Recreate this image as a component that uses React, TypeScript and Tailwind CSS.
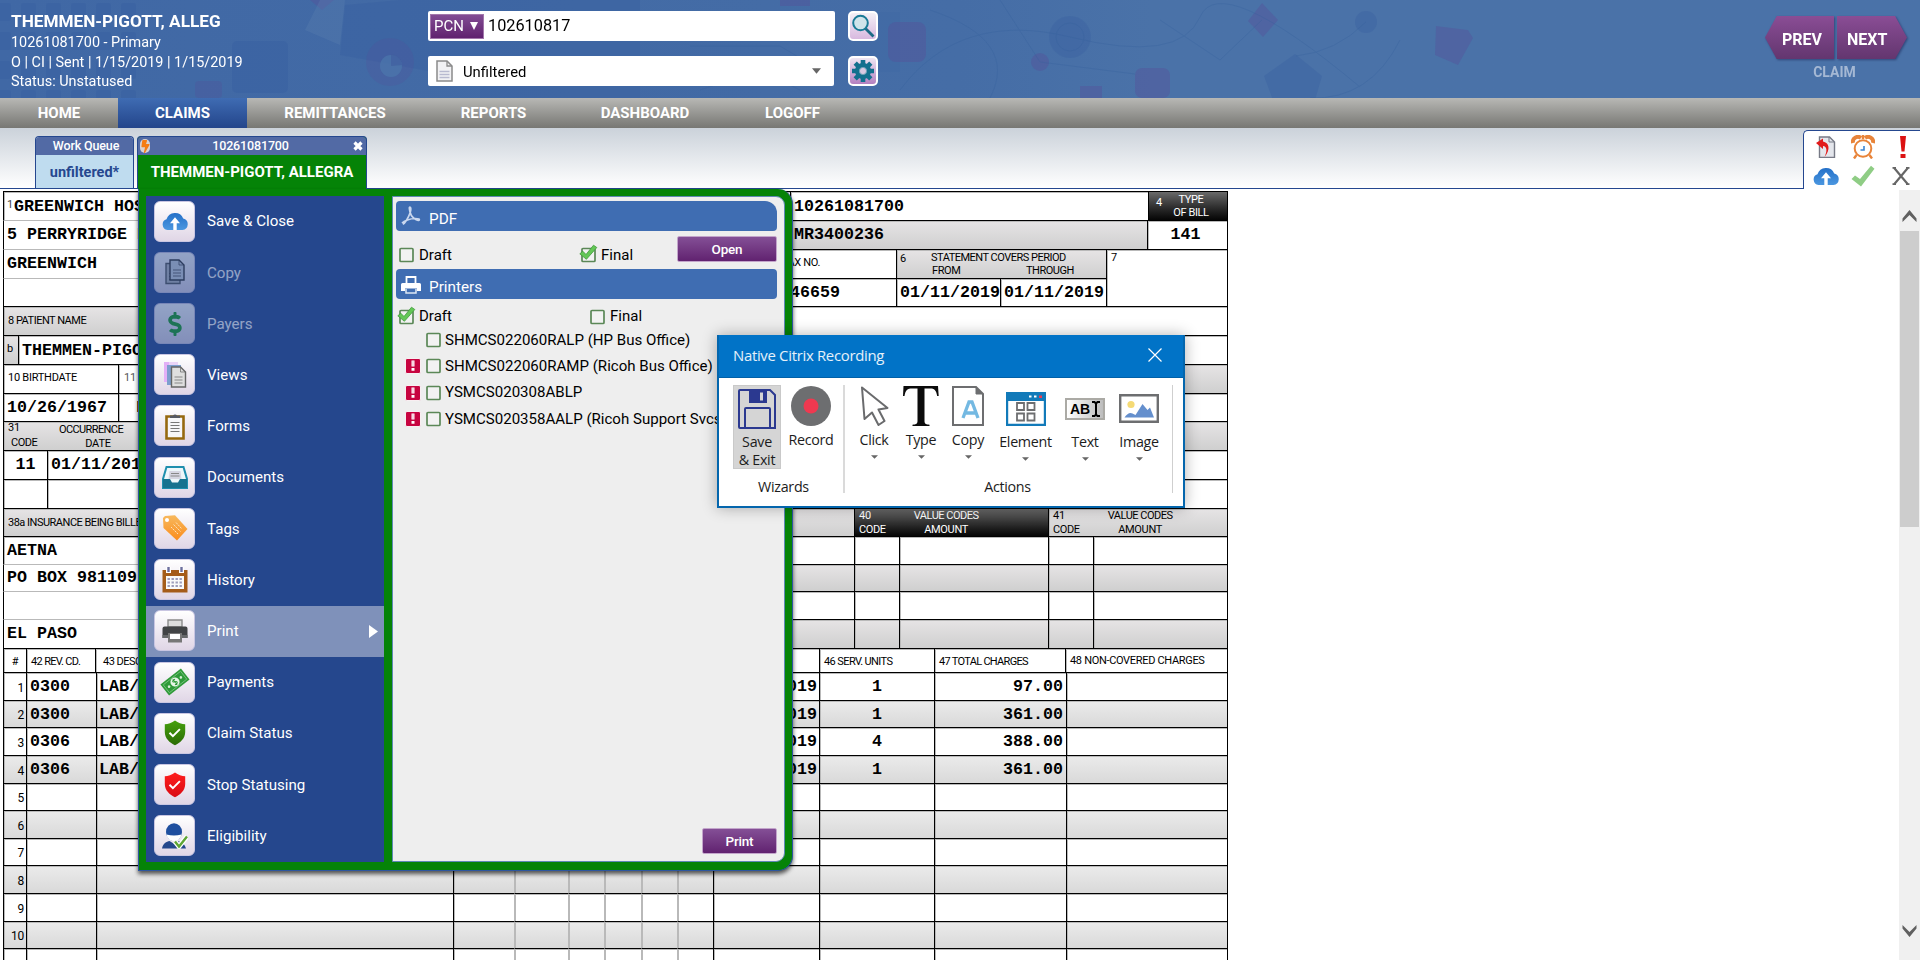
import React from "react";
import { FaDollarSign, FaBolt } from "react-icons/fa";

type Kids = { children?: React.ReactNode };

function Cell({ c = "", children }: { c?: string } & Kids) {
  return (
    <div
      className={
        "flex shrink-0 items-center overflow-hidden border-l border-t border-l-black whitespace-pre shadow-[inset_1px_1px_0_#b9b9b9] " + c
      }
    >
      {children}
    </div>
  );
}

const B = "border-t-black";
const GRAY = "border-t-black bg-linear-to-b from-[#e6e4e5] to-[#cfcfcf]";
const DARK = "border-t-black bg-linear-to-b from-[#6a6a6a] to-[#060606] text-white shadow-none";

function V({ c = "", children }: { c?: string } & Kids) {
  return <span className={"pt-[2px] font-['Liberation_Mono',monospace] text-[16.67px] font-bold leading-none " + c}>{children}</span>;
}
function L({ c = "", t = "tracking-[-0.2px]", children }: { c?: string; t?: string } & Kids) {
  return <span className={"text-[11px] leading-[13px] " + t + " " + c}>{children}</span>;
}

function ValueHead({ n, c }: { n: string; c: string }) {
  return (
    <Cell c={c}>
      <div className="flex flex-col pl-1 pt-px">
        <L c="leading-[14px]">{n}</L>
        <L c="leading-[14px]" t="tracking-[-0.4px]">CODE</L>
      </div>
      <div className="ml-[27px] flex w-[67px] flex-col items-center pt-px">
        <L c="leading-[14px]" t="tracking-[-0.5px]">VALUE CODES</L>
        <L c="leading-[14px]" t="tracking-[-0.3px]">AMOUNT</L>
      </div>
    </Cell>
  );
}

const lines = [
  { n: "1", h: "h-[28px]", code: "0300", units: "1", total: "97.00" },
  { n: "2", h: "h-[27px]", code: "0300", units: "1", total: "361.00" },
  { n: "3", h: "h-[28px]", code: "0306", units: "4", total: "388.00" },
  { n: "4", h: "h-[28px]", code: "0306", units: "1", total: "361.00" },
  { n: "5", h: "h-[27px]" },
  { n: "6", h: "h-[28px]" },
  { n: "7", h: "h-[27px]" },
  { n: "8", h: "h-[28px]" },
  { n: "9", h: "h-[28px]" },
  { n: "10", h: "h-[27px]" },
  { n: "", h: "h-[28px]" },
];

function ClaimForm() {
  return (
    <div className="ml-[3px] mt-[2px] h-[790px] w-[1225px] shrink-0 border-r border-black text-black">
      <div className="flex h-[29px]">
        <Cell c={"w-[787px] pl-[3px] " + B}>
          <L c="mb-1 w-[7px] text-[10px] text-[#444]">1</L>
          <V>GREENWICH HOSPITAL</V>
        </Cell>
        <Cell c={"w-[358px] pl-[3px] " + B}><V>10261081700</V></Cell>
        <Cell c={"w-[79px] " + DARK}>
          <L c="mb-2 ml-[7px] w-[17px]">4</L>
          <L c="w-[36px] text-center leading-[10px]" t="tracking-[-0.4px]">{"TYPE\nOF BILL"}</L>
        </Cell>
      </div>
      <div className="flex h-[29px]">
        <Cell c="w-[787px] border-t-[#b9b9b9] pl-[3px] shadow-none"><V c="-mt-px">5 PERRYRIDGE ROAD</V></Cell>
        <Cell c={"w-[357px] pl-[3px] " + GRAY}><V c="-mt-px">MR3400236</V></Cell>
        <Cell c={"w-[80px] justify-center " + B}><V c="-ml-1 -mt-px">141</V></Cell>
      </div>
      <div className="flex h-[57px]">
        <div className="w-[732px]">
          <div className="flex h-[29px]"><Cell c="w-full border-t-[#b9b9b9] pl-[3px] shadow-none"><V c="-mt-px">GREENWICH</V></Cell></div>
          <div className="flex h-[28px]"><Cell c="w-full border-t-[#b9b9b9] shadow-none" /></div>
        </div>
        <div className="w-[161px]">
          <div className="flex h-[29px]"><Cell c={"w-full justify-end pr-[76px] " + B}><L c="mt-[-4px]" t="tracking-[-0.35px]">5 FED. TAX NO.</L></Cell></div>
          <div className="flex h-[28px]"><Cell c={"w-full pl-[4px] " + B}><V>06-0646659</V></Cell></div>
        </div>
        <div className="w-[210px]">
          <div className="flex h-[29px]">
            <Cell c={"w-full items-start pl-[3px] " + GRAY}>
              <L c="mt-[2px] w-[31px]">6</L>
              <div className="flex w-[143px] flex-col pt-px">
                <L t="tracking-[-0.5px]">STATEMENT COVERS PERIOD</L>
                <div className="flex justify-between pl-px"><L t="tracking-[-0.4px]">FROM</L><L t="tracking-[-0.45px]">THROUGH</L></div>
              </div>
            </Cell>
          </div>
          <div className="flex h-[28px]">
            <Cell c={"w-[104px] pl-[3px] " + B}><V>01/11/2019</V></Cell>
            <Cell c={"w-[106px] pl-[3px] " + B}><V>01/11/2019</V></Cell>
          </div>
        </div>
        <Cell c={"w-[121px] items-start pl-[4px] pt-px " + B}><L>7</L></Cell>
      </div>
      <div className="flex h-[29px]">
        <Cell c={"w-[787px] pl-[4px] " + GRAY}><L c="-mt-px" t="tracking-[-0.5px]">8 PATIENT NAME</L></Cell>
        <Cell c={"w-[437px] " + B} />
      </div>
      <div className="flex h-[29px]">
        <Cell c={"w-[15px] pl-[3px] " + GRAY}><L c="-mt-1">b</L></Cell>
        <Cell c={"w-[1209px] pl-[3px] " + B}><V>THEMMEN-PIGOTT</V></Cell>
      </div>
      <div className="flex h-[29px]">
        <Cell c={"w-[115px] pl-[4px] " + B}><L c="-mt-1" t="tracking-[-0.25px]">10 BIRTHDATE</L></Cell>
        <Cell c={"w-[60px] pl-[5px] " + B}><L c="-mt-1 text-[#555]">11 SEX</L></Cell>
        <Cell c={"w-[1049px] " + GRAY} />
      </div>
      <div className="flex h-[28px]">
        <Cell c={"w-[115px] pl-[3px] " + B}><V>10/26/1967</V></Cell>
        <Cell c={"w-[60px] pl-[17px] " + B}><V>F</V></Cell>
        <Cell c={"w-[1049px] " + B} />
      </div>
      <div className="flex h-[29px]">
        <Cell c={"w-[1224px] " + GRAY}>
          <div className="-mt-px flex w-[55px] flex-col pl-[4px]"><L c="leading-[14px]">31</L><L c="pl-[3px] pt-px leading-[14px]" t="tracking-[-0.45px]">CODE</L></div>
          <div className="flex w-[64px] flex-col items-center pt-px"><L c="leading-[14px]" t="tracking-[-0.6px]">OCCURRENCE</L><L c="pl-[14px] leading-[14px]">DATE</L></div>
        </Cell>
      </div>
      <div className="flex h-[29px]">
        <Cell c={"w-[44px] justify-center " + B}><V c="-mt-px">11</V></Cell>
        <Cell c={"w-[1180px] pl-[3px] " + B}><V c="-mt-px">01/11/2019</V></Cell>
      </div>
      <div className="flex h-[29px]">
        <Cell c={"w-[44px] " + B} />
        <Cell c={"w-[1180px] " + B} />
      </div>
      <div className="flex h-[28px]">
        <Cell c={"w-[851px] pl-[4px] " + GRAY}><L c="-mt-px" t="tracking-[-0.5px]">38a INSURANCE BEING BILLED</L></Cell>
        <ValueHead n="40" c={"w-[194px] " + DARK} />
        <ValueHead n="41" c={"w-[179px] " + GRAY} />
      </div>
      {[
        ["h-[28px]", B, "AETNA", B],
        ["h-[27px]", GRAY, "PO BOX 981109", "border-t-[#b9b9b9] shadow-none"],
        ["h-[28px]", B, "", "border-t-[#b9b9b9] shadow-none"],
        ["h-[29px]", GRAY, "EL PASO", "border-t-[#b9b9b9] shadow-none"],
      ].map(([h, g, t, lc], i) => (
        <div key={i} className={"flex " + h}>
          <Cell c={"w-[400px] pl-[3px] " + lc}><V c="-mt-px">{t}</V></Cell>
          <Cell c={"w-[451px] " + g} />
          <Cell c={"w-[45px] " + g} />
          <Cell c={"w-[149px] " + g} />
          <Cell c={"w-[45px] " + g} />
          <Cell c={"w-[134px] " + g} />
        </div>
      ))}
      <div className="flex h-[24px]">
        <Cell c={"w-[23px] justify-center pt-px " + B}><L>#</L></Cell>
        <Cell c={"w-[69px] pl-[4px] pt-[2px] " + B}><L t="tracking-[-0.65px]">42 REV. CD.</L></Cell>
        <Cell c={"w-[724px] pl-[7px] pt-[2px] " + B}><L t="tracking-[-0.5px]">43 DESCRIPTION</L></Cell>
        <Cell c={"w-[115px] pl-[4px] pt-[2px] " + B}><L t="tracking-[-0.6px]">46 SERV. UNITS</L></Cell>
        <Cell c={"w-[131px] pl-[4px] pt-[2px] " + B}><L t="tracking-[-0.7px]">47 TOTAL CHARGES</L></Cell>
        <Cell c={"w-[162px] pl-[4px] " + B}><L t="tracking-[-0.32px]">48 NON-COVERED CHARGES</L></Cell>
      </div>
      {lines.map((l, i) => {
        const g = i % 2 ? "border-t-black bg-linear-to-b from-[#ebebeb] to-[#d9d9d9]" : B;
        return (
          <div key={i} className={"flex " + l.h}>
            <Cell c={"w-[23px] justify-end pr-[2px] " + g}><L c="mt-[3px] text-[12px]">{l.n}</L></Cell>
            <Cell c={"w-[70px] pl-[3px] " + g}><V>{l.code}</V></Cell>
            <Cell c={"w-[357px] pl-[2px] " + g}><V>{l.code ? "LAB/" : ""}</V></Cell>
            <Cell c={"w-[61px] " + g} />
            <Cell c={"w-[54px] border-l-[#b9b9b9]! " + g} />
            <Cell c={"w-[36px] border-l-[#b9b9b9]! " + g} />
            <Cell c={"w-[37px] border-l-[#b9b9b9]! " + g} />
            <Cell c={"w-[36px] border-l-[#b9b9b9]! " + g} />
            <Cell c={"w-[36px] border-l-[#b9b9b9]! " + g} />
            <Cell c={"w-[106px] justify-end pr-[2px] " + g}><V>{l.code ? "01112019" : ""}</V></Cell>
            <Cell c={"w-[115px] justify-center " + g}><V>{l.units}</V></Cell>
            <Cell c={"w-[132px] justify-end pr-[3px] " + g}><V>{l.total}</V></Cell>
            <Cell c={"w-[161px] " + g} />
          </div>
        );
      })}
    </div>
  );
}

/* ---------- menu icons ---------- */
const Cloud = () => (
  <svg viewBox="0 0 26 18" className="h-[18px] w-[26px]">
    <defs><linearGradient id="cl" x1="0" y1="0" x2="0" y2="1"><stop offset="0" stopColor="#2470c8" /><stop offset="1" stopColor="#4b97e0" /></linearGradient></defs>
    <path d="M5.500 18A5.500 5.500 0 0 1 4.500 7.300 A8.900 8.900 0 0 1 21.200 6.400 A5.900 5.900 0 0 1 20.500 18Z" fill="url(#cl)" />
    <path d="M11.300 18v-6.700H8L13 5.200l5 6.100h-3.300V18Z" fill="#fff" />
  </svg>
);
const Page = ({ x, y, f, s }: { x: number; y: number; f: string; s: string }) => (
  <g transform={`translate(${x} ${y})`}>
    <path d="M0 0h9l5 5v15H0Z" fill={f} stroke={s} strokeWidth="1.400" />
    <path d="M9 0v5h5M3 10h8M3 13h8M3 16h8" fill="none" stroke={s} strokeWidth=".7" />
  </g>
);
const CopyIcon = () => (
  <svg viewBox="0 0 20 26" className="h-[26px] w-[20px]"><Page x={1} y={4.500} f="#b9b9b9" s="#555" /><Page x={5} y={1} f="#cfd4dd" s="#333" /></svg>
);
const ViewsIcon = () => (
  <svg viewBox="0 0 24 28" className="h-[28px] w-[24px]">
    <path d="M1 1h14v20H1Z" fill="#ead4f7" /><path d="M1 1h5v20H1Z" fill="#e3b0f7" />
    <path d="M4 4h14v20H4Z" fill="#7d9fce" /><Page x={8.500} y={6} f="#dedede" s="#666" />
  </svg>
);
const FormsIcon = () => (
  <svg viewBox="0 0 22 28" className="h-[28px] w-[22px]">
    <path d="M2.500 4.500h17v22h-17Z" fill="#f6f6f8" stroke="#96690f" strokeWidth="2.600" />
    <path d="M6 6V3.500h3a2.500 2.500 0 0 1 4 0h3V6Z" fill="#555862" />
    <path d="M6.500 10.500h9M6.500 13.500h9M6.500 16.500h9M6.500 19.500h9" stroke="#777" strokeWidth="1.200" />
  </svg>
);
const DocsIcon = () => (
  <svg viewBox="0 0 26 23" className="h-[23px] w-[26px]">
    <path d="M4.500 1h17L25 13v9H1v-9Z" fill="#eef7fa" stroke="#1f8fae" strokeWidth="2" />
    <path d="M7.500 5h11l1 8H6.500Z" fill="#d6d6e2" /><path d="M9 7.500h8M8.500 10h9" stroke="#888" />
    <path d="M1 13h7l2 3.500h6l2-3.500h7v9H1Z" fill="#17728f" />
  </svg>
);
const TagIcon = () => (
  <svg viewBox="0 0 26 26" className="size-[26px]">
    <defs><linearGradient id="tg" x1="0" y1="0" x2="0" y2="1"><stop offset="0" stopColor="#f7b95e" /><stop offset="1" stopColor="#fb8c1c" /></linearGradient></defs>
    <path d="M1 3 3 1l10-.800L25.500 14 15 25.500 1.500 13Z" fill="url(#tg)" /><circle cx="5" cy="5" r="2" fill="#fff" />
    <path d="m9 12 7 7M11.500 9.500l7 7M14 7.500l6 6.500" stroke="#fde0b8" strokeDasharray="2 .8" />
  </svg>
);
const CalIcon = () => (
  <svg viewBox="0 0 26 26" className="size-[26px]">
    <path d="M.500 3h25v22.500H.500Z" fill="#a55c1a" /><path d="M4 9h18v13H4Z" fill="#fafafa" />
    <path d="M5.500 12h15M5.500 15.500h15M5.500 19h15" stroke="#9d9dbb" strokeWidth="2" strokeDasharray="2.400 1.600" />
    <path d="M4 0h5v6H4ZM17 0h5v6h-5Z" fill="#fff" /><path d="M6.500 0v5M19.500 0v5" stroke="#6d709e" strokeWidth="2.400" />
  </svg>
);
const PrinterIcon = () => (
  <svg viewBox="0 0 26 24" className="h-[24px] w-[26px]">
    <path d="M6 1h14v7H6Z" fill="#ddd" stroke="#8b8b8b" strokeWidth="1.400" />
    <path d="M2.500 7.500h21a2 2 0 0 1 2 2V19h-25V9.500a2 2 0 0 1 2-2Z" fill="#414345" />
    <path d="M.500 16h25v3H.500Z" fill="#66686a" /><path d="M6 14h14v9.500H6Z" fill="#777" /><path d="M8 15h10v5H8Z" fill="#fff" />
  </svg>
);
const MoneyIcon = () => (
  <svg viewBox="0 0 30 28" className="h-[28px] w-[30px]">
    <g transform="rotate(-38 15 14)"><path d="M2 7h26v14H2Z" fill="#2f9a39" /><path d="M4 9h22v10H4Z" fill="none" stroke="#7cc683" strokeWidth=".8" />
      <circle cx="15" cy="14" r="4.600" fill="#e6f5e6" /><circle cx="7.500" cy="14" r="1.300" fill="#d5efd5" /><circle cx="22.500" cy="14" r="1.300" fill="#d5efd5" />
      <path d="M16.800 11.800c-3-1.400-4.800 1-1.800 2s1.600 3.600-1.800 2.400M15 10.500v7" fill="none" stroke="#2f9a39" /></g>
  </svg>
);
const Shield = ({ a, b, id }: { a: string; b: string; id: string }) => (
  <svg viewBox="0 0 22 26" className="h-[26px] w-[22px]">
    <defs><linearGradient id={id} x1="0" y1="0" x2="0" y2="1"><stop offset="0" stopColor={a} /><stop offset="1" stopColor={b} /></linearGradient></defs>
    <path d="M11 .500C8 3 4 4 .800 4.200V12c0 6.500 5 10.700 10.200 13.300C16.200 22.700 21.200 18.500 21.200 12V4.200C18 4 14 3 11 .500Z" fill={`url(#${id})`} />
    <path d="m5.500 12.700 3.400 3.400 7-7" fill="none" stroke="#fff" strokeWidth="2" />
  </svg>
);
const PersonIcon = () => (
  <svg viewBox="0 0 26 26" className="size-[26px]">
    <path d="M0 25.500c1-5 4.500-7 7.500-7.500l4 2.500L15 18c4 .500 8 3 9 7.500Z" fill="#24478c" />
    <ellipse cx="12" cy="9" rx="8" ry="8.700" fill="#1f4f9f" /><path d="M4.500 11.500q7.500 2 15 0c-.600 3.800-3.700 6.500-7.500 6.500s-7-2.700-7.500-6.500Z" fill="#fff" />
    <path d="m13 18.500 4 5L25 13.500" fill="none" stroke="#fff" strokeWidth="5" /><path d="m13 18.500 4 5L25 13.500" fill="none" stroke="#5ea534" strokeWidth="2.400" />
  </svg>
);

const menu: { t: string; i: React.ReactNode; off?: boolean; on?: boolean }[] = [
  { t: "Save & Close", i: <Cloud /> },
  { t: "Copy", i: <CopyIcon />, off: true },
  { t: "Payers", i: <FaDollarSign className="h-[24px] w-[18px] text-[#16a01f]" />, off: true },
  { t: "Views", i: <ViewsIcon /> },
  { t: "Forms", i: <FormsIcon /> },
  { t: "Documents", i: <DocsIcon /> },
  { t: "Tags", i: <TagIcon /> },
  { t: "History", i: <CalIcon /> },
  { t: "Print", i: <PrinterIcon />, on: true },
  { t: "Payments", i: <MoneyIcon /> },
  { t: "Claim Status", i: <Shield a="#46a00e" b="#2b6b05" id="sg" /> },
  { t: "Stop Statusing", i: <Shield a="#ff1e1e" b="#d90b14" id="sr" /> },
  { t: "Eligibility", i: <PersonIcon /> },
];

function Check({ on, c = "" }: { on?: boolean; c?: string }) {
  return (
    <svg viewBox="0 0 18 18" className={"size-[18px] shrink-0 overflow-visible " + c}>
      <rect x="3" y="2.500" width="13" height="13" rx="1" fill="#f2f2f2" stroke="#5b8857" strokeWidth="1.700" />
      {on && <path d="M.800 7.800 3.800 5.200l3.200 3.300L14.500-.800 17.800 1.500 7.400 13.300Z" fill="#63c756" stroke="#3f9a3a" strokeWidth=".8" />}
    </svg>
  );
}
function Alert() {
  return (
    <svg viewBox="0 0 16 16" className="size-[16px] shrink-0">
      <rect x=".500" y=".500" width="15" height="15" rx="1.500" fill="#c70440" stroke="#f8eef1" />
      <path d="M6.500 2.500h3v6h-3ZM6.500 10h3v2.800h-3Z" fill="#fff" /><path d="M8 3v5" stroke="#c70440" strokeWidth=".3" />
    </svg>
  );
}
const PBTN = "flex items-center justify-center rounded-[2px] border border-[#c3a5cb] bg-linear-to-b from-[#844f96] to-[#612270] text-[13.5px] font-medium tracking-[-0.2px] text-white";

const printers = [
  { n: "SHMCS022060RALP (HP Bus Office)", a: false },
  { n: "SHMCS022060RAMP (Ricoh Bus Office)", a: true },
  { n: "YSMCS020308ABLP", a: true },
  { n: "YSMCS020358AALP (Ricoh Support Svcs)", a: true },
];

function ClaimMenu() {
  return (
    <div className="absolute left-[138px] top-[189px] flex h-[682px] w-[655px] rounded-r-[15px] border border-t-0 border-[#2c55a0] bg-[#058307] px-[7px] pb-[8px] pt-[7px] shadow-[0_3px_4px_rgba(0,0,0,0.65)]">
      <div className="w-[238px] shrink-0 bg-[#25478d]">
        {menu.map((m) => (
          <div key={m.t} className={"flex h-[51.23px] items-center pl-[8px] " + (m.on ? "bg-[#7f91ba]" : "")}>
            <div className={"-mt-px flex w-full items-center " + (m.off ? "opacity-50" : "")}>
              <div className="flex size-[41px] shrink-0 items-center justify-center rounded-[6px] border border-[#c9c6e2] bg-linear-to-b from-white to-[#e0d6e6]">{m.i}</div>
              <span className="ml-[12px] pt-px text-[15.1px] text-white">{m.t}</span>
              {m.on && <svg viewBox="0 0 9 13" className="ml-auto mr-[6px] mt-[2px] h-[13px] w-[9px]"><path d="M0 0l9 6.500L0 13Z" fill="#fff" /></svg>}
            </div>
          </div>
        ))}
      </div>
      <div className="ml-[8px] flex w-[393px] flex-col rounded-r-[9px] border border-[#5f88b5] bg-[#eeeeee] pl-[3px] pr-[7px] pt-[4px] text-[15px] text-black">
        <div className="flex h-[30px] w-[381px] items-center rounded-[4px] rounded-tr-[12px] bg-[#3f6db2] pl-[5px] pt-[6px] text-[15.300px] text-white">
          <svg viewBox="0 0 20 20" className="mb-[6px] mr-[8px] size-[20px]"><path d="M1 17c2-2 8-4.500 13-4.500 4 0 5 1 4 1.700-2.500.800-8-2.700-9-8.200C8.300 2.500 8 1 9 1s1.200 2.500 0 6C7.500 11.500 4 17.500 1.800 18.300" fill="none" stroke="#c9d7ee" strokeWidth="1.700" /></svg>
          PDF
        </div>
        <div className="flex h-[38px] items-start pt-[5px]">
          <div className="flex w-[180px] items-center pl-[1px] pt-[8px]"><Check /><span className="ml-[4px]">Draft</span></div>
          <div className="flex w-[101px] items-center pl-[3px] pt-[8px]"><Check on /><span className="ml-[4px]">Final</span></div>
          <button className={"h-[26px] w-[100px] " + PBTN}>Open</button>
        </div>
        <div className="flex h-[30px] w-[381px] items-center rounded-[4px] bg-[#3f6db2] pl-[5px] pt-[6px] text-[15.300px] text-white">
          <svg viewBox="0 0 20 18" className="mb-[5px] mr-[8px] h-[18px] w-[20px]"><path d="M5.500 8V1h9v7" fill="none" stroke="#fff" strokeWidth="1.800" /><path d="M1.500 7h17A1.500 1.500 0 0 1 20 8.500V15h-4v-2.500H4V15H0V8.500A1.500 1.500 0 0 1 1.500 7Z" fill="#fff" /><path d="M5 13v4h10v-4" fill="none" stroke="#dde7f5" strokeWidth="1.500" /></svg>
          Printers
        </div>
        <div className="flex h-[28px] items-center pt-[7px]">
          <div className="flex w-[192px] items-center pl-[1px]"><Check on /><span className="ml-[4px]">Draft</span></div>
          <div className="flex items-center"><Check /><span className="ml-[4px]">Final</span></div>
        </div>
        {printers.map((p) => (
          <div key={p.n} className="flex h-[26.300px] items-center whitespace-nowrap pl-[9px]">
            <div className="w-[19px]">{p.a && <Alert />}</div>
            <Check /><span className="ml-[3px] text-[15.05px]">{p.n}</span>
          </div>
        ))}
        <button className={"mb-[7px] ml-auto mt-auto h-[26px] w-[75px] " + PBTN}>Print</button>
      </div>
    </div>
  );
}

/* ---------- recording dialog ---------- */
function Tool({ c, icon, label, drop }: { c: string; icon: React.ReactNode; label: string; drop?: boolean }) {
  return (
    <div className={"flex shrink-0 flex-col items-center " + c}>
      {icon}
      <span className="mt-[4px] whitespace-nowrap leading-[20px]">{label}</span>
      {drop && <svg viewBox="0 0 8 4" className="mt-[5px] h-[4px] w-[7px] shrink-0"><path d="M0 0h8L4 4Z" fill="#666" /></svg>}
    </div>
  );
}

function Dialog() {
  return (
    <div className="absolute left-[717px] top-[335px] flex h-[173px] w-[468px] flex-col border-2 border-t-0 border-[#0466ad] bg-white font-['Open_Sans','Noto_Sans',sans-serif] text-[14.300px] tracking-[-0.300px] text-[#1c1c1c] shadow-[0_0_14px_rgba(0,0,0,0.300)]">
      <div className="flex h-[43px] shrink-0 items-center justify-between border-b border-[#0060a8] bg-[#0173c7] pb-[2px] pl-[14px] pr-[21px] text-[14.900px] text-white/90">
        <span>Native Citrix Recording</span>
        <svg viewBox="0 0 14 14" className="size-[14px]"><path d="M.500.500l13 13M13.500.500l-13 13" stroke="#fff" strokeWidth="1.200" /></svg>
      </div>
      <div className="flex pt-[7px]">
        <div className="flex h-[108px] w-[126px] flex-col items-center border-r-2 border-[#dadada] pl-[12px]">
          <div className="flex w-full">
            <div className="ml-[2px] flex h-[84px] w-[48px] shrink-0 flex-col items-center border border-[#c9c9c9] bg-[#d5d5d5] pt-[3px] text-center leading-[18px]">
              <svg viewBox="0 0 38 40" className="h-[40px] w-[38px] shrink-0">
                <path d="M2 1h30l5 5v33H2a1 1 0 0 1-1-1V2a1 1 0 0 1 1-1Z" fill="none" stroke="#2b3990" strokeWidth="2" />
                <path d="M11 1h18v13H11Z" fill="#2b3990" /><path d="M22 3.500h3v8h-3Z" fill="#d5d5d5" />
                <path d="M7 39V20q0-1 1-1h23q1 0 1 1v19Z" fill="none" stroke="#2b3990" strokeWidth="2" />
              </svg>
              <span className="mt-[4px]">Save<br />&amp; Exit</span>
            </div>
            <Tool c="ml-[7px] w-[46px]" label="Record" icon={<svg viewBox="0 0 40 40" className="mt-px size-[40px]"><circle cx="20" cy="20" r="20" fill="#6d6e70" /><circle cx="20" cy="20" r="7.500" fill="#ef3950" /></svg>} />
          </div>
          <span className="mr-[7px] mt-[8px] leading-[20px]">Wizards</span>
        </div>
        <div className="flex h-[108px] w-[328px] flex-col items-center border-r border-[#cfcfcf]">
          <div className="flex h-[84px] w-full shrink-0">
            <Tool c="ml-[9px] w-[40px] pt-px" drop label="Click" icon={
              <svg viewBox="0 0 30 40" className="h-[40px] w-[30px]"><path d="M3 1.500 5.500 33l7.500-6.500 6.500 12.500 6-4-6-11.500 9-1.500Z" fill="#fff" stroke="#6a6b6d" strokeWidth="2" strokeLinejoin="round" /></svg>} />
            <Tool c="ml-[6px] w-[42px] pt-px" drop label="Type" icon={
              <svg viewBox="0 0 36 40" className="h-[40px] w-[36px]"><path d="M.500 0h34.500l.700 10h-1.500c-1-6-3-7.500-7-7.500h-5.700V35c0 2.500 1 3.500 5 3.700V40H9.500v-1.300c4-.200 5-1.200 5-3.700V2.500H9C4.500 2.500 2.500 4 1.500 10H0Z" fill="#0b0b0b" /></svg>} />
            <Tool c="ml-[5px] w-[42px] pt-px" drop label="Copy" icon={
              <svg viewBox="0 0 32 40" className="h-[40px] w-[32px]"><path d="M1 1h23l7 7v31H1Z" fill="#fff" stroke="#6d6e70" strokeWidth="2" /><path d="M24 1v7h7Z" fill="#6d6e70" stroke="#6d6e70" /><path d="M11 32 17 16h3l6 16M13 27h11" fill="none" stroke="#74b9e2" strokeWidth="3.300" /></svg>} />
            <Tool c="ml-[5px] w-[63px] pt-[7px]" drop label="Element" icon={
              <svg viewBox="0 0 40 34" className="mb-[2px] h-[34px] w-[40px]"><path d="M1 1h38v32H1Z" fill="#fff" stroke="#127ab9" strokeWidth="2.400" /><path d="M0 0h40v9H0Z" fill="#127ab9" /><path d="M23 3.500h2.500v2H23ZM28 3.500h2.500v2H28Z" fill="#fff" /><path d="M33 3.500h3v2.500h-3Z" fill="#ef3950" />
                <path d="M11 11h7v7h-7ZM21.500 11h7v7h-7ZM11 21.500h7v7h-7ZM21.500 21.500h7v7h-7Z" fill="none" stroke="#6d6e70" strokeWidth="1.800" /></svg>} />
            <Tool c="ml-[7px] w-[42px] pt-[13px]" drop label="Text" icon={
              <div className="mb-[8px] flex h-[22px] w-[40px] shrink-0 items-center justify-center border-2 border-[#abaaa5] bg-linear-to-r from-white to-[#bdbdbd] font-['Liberation_Sans',sans-serif] text-[14px] font-bold tracking-[-0.2px] text-black">
                AB<svg viewBox="0 0 8 16" className="ml-[2px] h-[16px] w-[8px]"><path d="M0 1h2.500L4 2.500 5.500 1H8M0 15h2.500L4 13.500 5.500 15H8M4 2v12" fill="none" stroke="#000" strokeWidth="2" /></svg>
              </div>} />
            <Tool c="ml-[12px] w-[42px] pt-[9px]" drop label="Image" icon={
              <svg viewBox="0 0 40 29" className="mb-[5px] h-[29px] w-[40px]"><path d="M1.200 1.200h37.600v26.600H1.200Z" fill="#fff" stroke="#6d6e70" strokeWidth="2.400" /><circle cx="12" cy="10.500" r="3.600" fill="#f5da75" /><path d="M5.500 23.500q4-6 8-4l3 1.500L23.500 10l5 6 2.500-2.500 4 10Z" fill="#648fcd" /></svg>} />
          </div>
          <span className="mt-[8px] pr-[2px] leading-[20px]">Actions</span>
        </div>
      </div>
    </div>
  );
}

/* ---------- header ---------- */
function Backdrop() {
  return (
    <svg viewBox="0 0 1920 98" className="absolute inset-0 h-[98px] w-[1920px]">
      <g fill="#355c9f" opacity=".3">
        {[0, 1, 2, 3, 4, 5].map((i) => [0, 1, 2, 3].map((j) => <rect key={i + "-" + j} x={i * 25 - 4} y={j * 29 + 3} width="15" height="18" rx="2" />))}
        <rect x="232" y="41" width="56" height="52" rx="5" />
        <path d="M345 5 400 0h80l10 60-40 15-110-20Z" /><rect x="480" y="0" width="160" height="98" />
        <path d="M640 40h120v58H640ZM860 12h40v60h-40Z" opacity=".4" />
        <circle cx="1070" cy="37" r="21" opacity=".9" /><circle cx="1366" cy="22" r="11" />
        <path d="m1295 54 27 22-7 24h-42l-9-24Z" />
      </g>
      <g fill="#57509a" opacity=".4">
        <circle cx="390" cy="62" r="24" opacity=".6" /><rect x="195" y="81" width="27" height="17" rx="4" opacity=".7" />
        <rect x="888" y="22" width="38" height="40" rx="8" /><path d="m1262 3 16 17-15 17-15-16Z" />
        <path d="M1436 26l32 4 5 8-15 27-23-10Z" /><rect x="1135" y="68" width="35" height="30" rx="7" /><circle cx="1040" cy="62" r="9" />
        <path d="M310 0h24l-12 10ZM1080 86h22v12h-22ZM780 0h30v6h-30Z" />
      </g>
      <path d="M320 0h25l-5 45-35-15Z" fill="#6288b5" opacity=".25" />
      <circle cx="391" cy="66" r="11" fill="#4b78ad" opacity=".7" />
      <path d="M391 66V54a12 12 0 0 1 11 11Z" fill="#41609f" opacity=".7" />
      <g fill="none" stroke="#35609c" opacity=".3">
        <circle cx="1070" cy="37" r="14" /><path d="M900 90q60-80 170-53t130-20 160 70M930 10q90 30 60 88M1000 0l40 62 95 12M1160 20l60 40 42-40M1366 22q-30 30-70 34M1400 40q-30 60-90 58" />
        <path d="M700 90l60-20 40 20M690 46h90l50 30" />
      </g>
    </svg>
  );
}

const nav = [["HOME", "w-[118px]"], ["CLAIMS", "w-[129px]"], ["REMITTANCES", "w-[176px]"], ["REPORTS", "w-[141px]"], ["DASHBOARD", "w-[162px]"], ["LOGOFF", "w-[133px]"]];
const SQ = "flex size-[30px] items-center justify-center rounded-[5px] border-2 border-white bg-linear-to-b";

export default function App() {
  return (
    <div className="relative flex h-[960px] w-[1920px] flex-col overflow-hidden bg-white font-[Roboto,sans-serif]">
      <header className="relative h-[98px] shrink-0 bg-linear-to-r from-[#4068a5] via-[#456da6] via-50% to-[#4a72a8] to-60% text-white">
        <Backdrop />
        <div className="relative flex h-full">
          <div className="w-[428px] pl-[11px] pt-[11px] text-[14.400px]">
            <div className="h-[21px] whitespace-nowrap text-[17.200px] font-bold leading-[21px]">THEMMEN-PIGOTT, ALLEG</div>
            <div className="h-[20px] leading-[21px]">10261081700 - Primary</div>
            <div className="h-[20px] leading-[22px]">O | CI | Sent | 1/15/2019 | 1/15/2019</div>
            <div className="h-[19px] leading-[20px]">Status: Unstatused</div>
          </div>
          <div className="flex w-[407px] flex-col gap-[15px] pt-[11px]">
            <div className="flex h-[30px] items-center rounded-[2px] bg-white pl-[2px]">
              <div className="flex h-[25px] w-[54px] items-center border border-[#a277ab] bg-linear-to-b from-[#824c93] to-[#60216f] pl-[3px] text-[15px]">PCN<svg viewBox="0 0 8 8" className="ml-[6px] size-[8px]"><path d="M0 0h8L4 8Z" fill="#fff" /></svg></div>
              <span className="ml-[4px] text-[16.300px] text-black">102610817</span>
            </div>
            <div className="flex h-[30px] w-[406px] items-center rounded-[2px] bg-white pl-[8px] text-[14.800px] text-black">
              <svg viewBox="0 0 17 22" className="h-[22px] w-[17px]"><path d="M1 1h10l5 5v15H1Z" fill="#f2f2f4" stroke="#8a8a8a" strokeWidth="1.500" /><path d="M11 1v5h5" fill="none" stroke="#8a8a8a" strokeWidth="1.300" /><path d="M3.500 11.500h10M3.500 14.500h10M3.500 17.500h10" stroke="#b8bad0" strokeWidth="1.500" /></svg>
              <span className="ml-[10px] pt-[2px]">Unfiltered</span>
              <svg viewBox="0 0 10 6" className="ml-auto mr-[13px] h-[6px] w-[9px]"><path d="M0 0h10L5 6Z" fill="#666" /></svg>
            </div>
          </div>
          <div className="ml-[13px] flex flex-col gap-[15px] pt-[11px]">
            <div className={SQ + " from-[#f4f0f6] to-[#d8b9df]"}>
              <svg viewBox="0 0 24 24" className="size-[24px]"><path d="m14.500 14.500 8 8" stroke="#1c6a85" strokeWidth="2.800" /><circle cx="9.500" cy="9" r="7.300" fill="#cfe3ea" stroke="#197a96" strokeWidth="2" /></svg>
            </div>
            <div className={SQ + " from-[#efe7f3] to-[#b480c0]"}><svg viewBox="0 0 24 24" className="size-[24px]"><g stroke="#12708e" strokeWidth="4.600"><path d="M12 1v22M1 12h22M4.200 4.200l15.600 15.600M19.800 4.200 4.200 19.800" /></g><circle cx="12" cy="12" r="8" fill="#12708e" /><circle cx="12" cy="12" r="3.600" fill="#d9c9e2" stroke="#6fa3b8" /></svg></div>
          </div>
          <div className="ml-auto mr-[13px] flex flex-col items-center pt-[16px]">
            <div className="flex gap-[3px] text-[16px] font-bold drop-shadow-[1px_1px_1px_rgba(30,40,90,0.600)]">
              <div className="flex h-[43px] w-[69px] items-center bg-linear-to-b from-[#8a4d95] to-[#63366f] pl-[17px] pt-[4px] [clip-path:polygon(17%_0,100%_0,100%_100%,17%_100%,0_50%)]">PREV</div>
              <div className="flex h-[43px] w-[70px] items-center bg-linear-to-b from-[#8a4d95] to-[#63366f] pl-[10px] pt-[4px] [clip-path:polygon(0_0,83%_0,100%_50%,83%_100%,0_100%)]">NEXT</div>
            </div>
            <div className="mt-[3px] pr-[3px] text-[14px] font-bold text-[#a5b8d4]">CLAIM</div>
          </div>
        </div>
      </header>
      <nav className="flex h-[30px] shrink-0 bg-linear-to-b from-[#b8b8b5] to-[#777773] text-[15px] font-bold text-white">
        {nav.map(([t, w]) => (
          <div key={t} className={"flex items-center justify-center " + w + (t === "CLAIMS" ? " bg-linear-to-b from-[#3f6cb3] to-[#24458b]" : "")}>{t}</div>
        ))}
      </nav>
      <div className="flex h-[61px] shrink-0 items-end border-b border-[#25478f] bg-linear-to-b from-[#cbd2da] to-white">
        <div className="ml-[35px] flex h-[52px] w-[99px] flex-col overflow-hidden rounded-t-[4px] border border-b-0 border-[#25478f] bg-[#bfdcef]">
          <div className="flex h-[18px] items-center justify-center bg-[#526aa5] pl-[3px] text-[12.5px] font-medium tracking-[-0.15px] text-white">Work Queue</div>
          <div className="flex flex-1 items-center justify-center pt-[2px] text-[14.500px] font-bold text-[#25478f]">unfiltered*</div>
        </div>
        <div className="-mb-px ml-[3px] flex h-[53px] w-[230px] flex-col overflow-hidden rounded-t-[4px] border border-b-0 border-[#25478f] bg-[#058307]">
          <div className="flex h-[18px] items-center justify-between bg-[#526aa5] px-[2px] text-[12.5px] font-medium tracking-[-0.15px] text-white">
            <span className="flex h-[14px] w-[10px] items-center justify-center rounded-full bg-[#d9d2d2]"><FaBolt className="h-[13px] w-[9px] text-[#f57c14]" /></span>
            <span className="pr-[2px]">10261081700</span>
            <svg viewBox="0 0 10 10" className="mr-px size-[10px]"><path d="m1.500 1.500 7 7M8.500 1.500l-7 7" stroke="#fff" strokeWidth="3.200" /></svg>
          </div>
          <div className="flex flex-1 items-center justify-center whitespace-nowrap text-[15px] font-bold text-white">THEMMEN-PIGOTT, ALLEGRA</div>
        </div>
        <div className="-mb-px ml-auto grid h-[59px] w-[117px] grid-cols-3 grid-rows-[32px_26px] place-items-center rounded-tl-[5px] border-l border-t border-[#25478f] bg-white pl-[3px]">
          <svg viewBox="0 0 20 22" className="size-[22px]"><path d="M3.500 1h10l5 5v15.500h-15Z" fill="#e4e6ec" stroke="#777a86" strokeWidth="1.400" /><path d="M13 1v5h5" fill="none" stroke="#777a86" /><path d="M0 7l7-4.500v3c6 1 8 8 1.500 15.500 3-6 2.500-11-1.500-11v3Z" fill="#e21b1b" /></svg>
          <svg viewBox="0 0 24 24" className="size-[24px]"><path d="M2 8a5 5 0 0 1 8-5M22 8a5 5 0 0 0-8-5" fill="none" stroke="#e8843a" strokeWidth="4" /><circle cx="12" cy="13.500" r="8.300" fill="#fff" stroke="#e8843a" strokeWidth="2" /><path d="M12 0v4M5.500 20 3 23.500M18.500 20l2.500 3.500" stroke="#e8843a" strokeWidth="2.400" /><path d="M13 11v4H9.500" fill="none" stroke="#3a86d4" strokeWidth="1.600" /></svg>
          <svg viewBox="0 0 8 22" className="ml-[3px] h-[22px] w-[8px]"><path d="M1 0h6L5.500 15.500h-3ZM1.500 18h5v4h-5Z" fill="#dc1212" /></svg>
          <div><Cloud /></div>
          <svg viewBox="0 0 24 22" className="h-[22px] w-[24px]"><path d="M.500 14 4 10.500l5 3.500L20 .800l3.500 3L10 21.500Z" fill="#8fcd85" /></svg>
          <svg viewBox="0 0 18 18" className="size-[18px]"><path d="M1.800.500 16 17.500M16.200.500 2 17.500M.500.700h3.500M14 .700h3.500M.500 17.300h3.500M14 17.300h3.500" stroke="#666" strokeWidth="2.200" /></svg>
        </div>
      </div>
      <main className="flex h-[771px] overflow-hidden bg-white">
        <ClaimForm />
        <div className="ml-auto mt-px flex h-[770px] w-[21px] flex-col items-center bg-[#f0f0f0] pt-[20px]">
          <svg viewBox="0 0 14 12" className="h-[12px] w-[15px] shrink-0"><path d="M0 8.500 7 0l7 8.500V12L7 5 0 12Z" fill="#606060" /></svg>
          <div className="mt-[9px] h-[296px] w-[19px] shrink-0 bg-[#cdcdcd]" />
          <svg viewBox="0 0 14 12" className="mb-[23px] mt-auto h-[12px] w-[15px] shrink-0"><path d="M0 3.500 7 12l7-8.500V0L7 7 0 0Z" fill="#606060" /></svg>
        </div>
      </main>
      <ClaimMenu />
      <Dialog />
    </div>
  );
}
